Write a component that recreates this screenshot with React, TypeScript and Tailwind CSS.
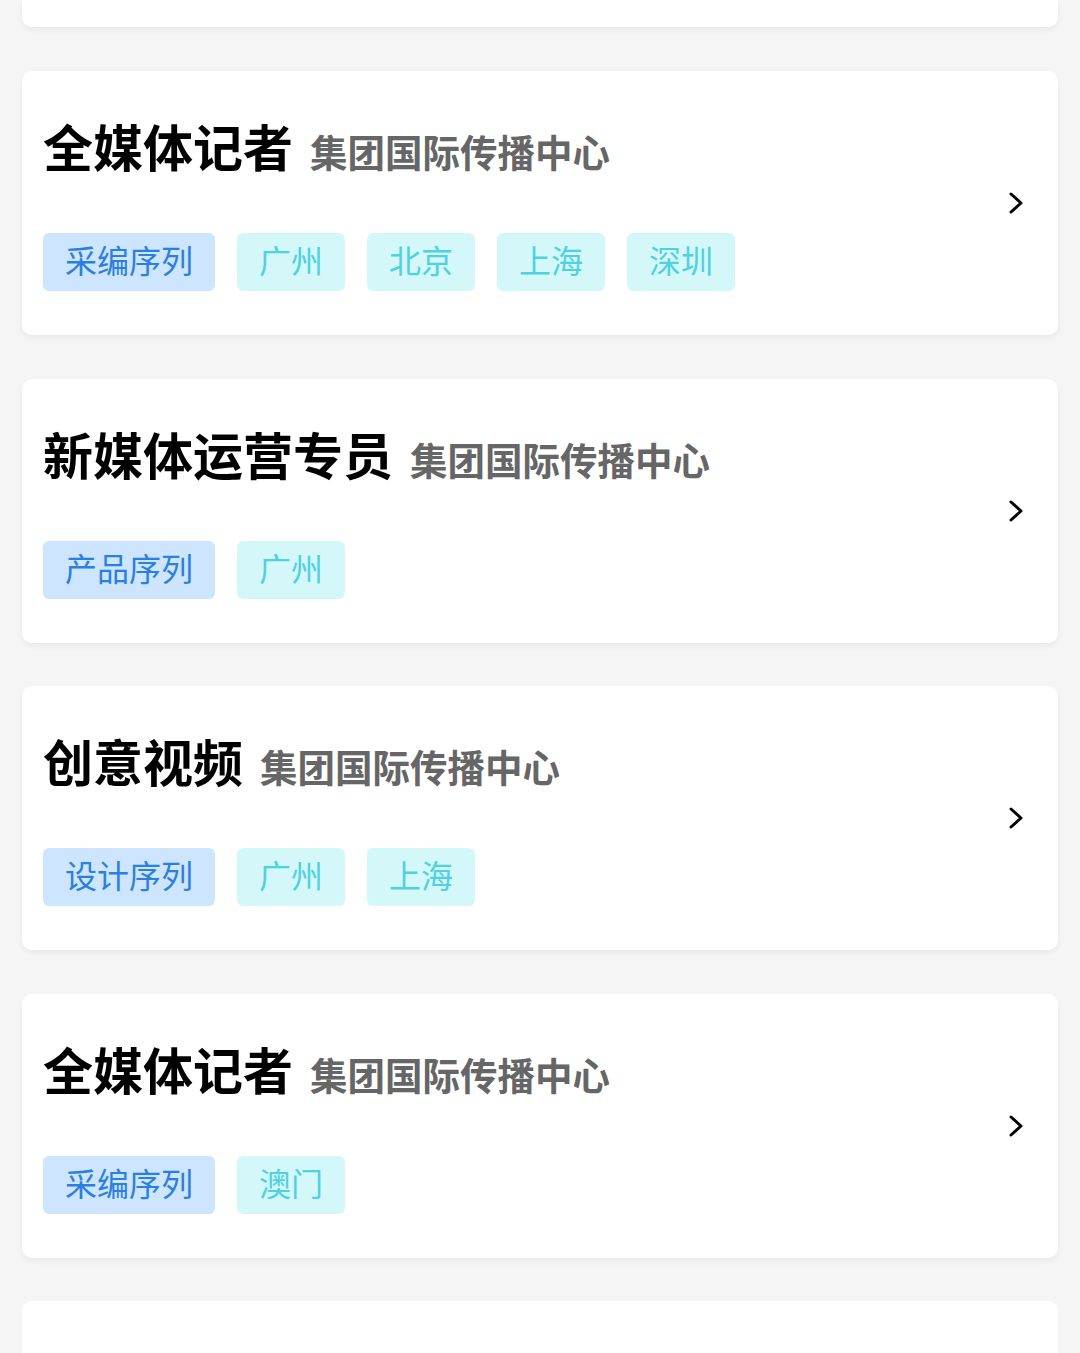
type Job = {
  title: string;
  dept: string;
  series: string;
  cities: string[];
};

const jobs: Job[] = [
  { title: '全媒体记者', dept: '集团国际传播中心', series: '采编序列', cities: ['广州', '北京', '上海', '深圳'] },
  { title: '新媒体运营专员', dept: '集团国际传播中心', series: '产品序列', cities: ['广州'] },
  { title: '创意视频', dept: '集团国际传播中心', series: '设计序列', cities: ['广州', '上海'] },
  { title: '全媒体记者', dept: '集团国际传播中心', series: '采编序列', cities: ['澳门'] },
];

const font = "font-['Noto_Sans_CJK_SC','Noto_Sans',sans-serif]";

function Chevron() {
  return (
    <svg width="16" height="24" viewBox="0 0 16 24" fill="none" className="shrink-0">
      <polyline
        points="3,3 13,12 3,21"
        stroke="#000"
        strokeWidth="3"
        strokeLinecap="round"
        strokeLinejoin="round"
      />
    </svg>
  );
}

function JobCard({ job }: { job: Job }) {
  return (
    <div className="flex items-center rounded-[10px] bg-white pl-[21px] pr-[34px] h-[264px] shadow-[0_3px_6px_rgba(0,0,0,0.05)]">
      <div className="flex-1">
        <div className="flex items-baseline gap-[17px] leading-[60px]">
          <span className="text-[50px] font-bold text-black">{job.title}</span>
          <span className="text-[37.5px] font-bold text-[#666666]">{job.dept}</span>
        </div>
        <div className="mt-[52px] flex gap-[22px]">
          <span className="flex h-[58px] items-center rounded-[6px] bg-[#cde5fe] px-[22px] pb-[6px] text-[32px] text-[#2b7fe0]">
            {job.series}
          </span>
          {job.cities.map((c, i) => (
            <span
              key={i}
              className="flex h-[58px] items-center rounded-[6px] bg-[#d4f7f9] px-[22px] pb-[6px] text-[32px] text-[#4fd2df]"
            >
              {c}
            </span>
          ))}
        </div>
      </div>
      <Chevron />
    </div>
  );
}

export default function App() {
  return (
    <div className={`min-h-screen bg-[#f5f5f5] px-[22px] ${font}`}>
      <div className="h-[27px] rounded-b-[10px] bg-white shadow-[0_3px_6px_rgba(0,0,0,0.05)]" />
      <div className="mt-[44px] flex flex-col gap-[43.5px]">
        {jobs.map((j, i) => (
          <JobCard key={i} job={j} />
        ))}
        <div className="h-[60px] rounded-t-[10px] bg-white" />
      </div>
    </div>
  );
}
